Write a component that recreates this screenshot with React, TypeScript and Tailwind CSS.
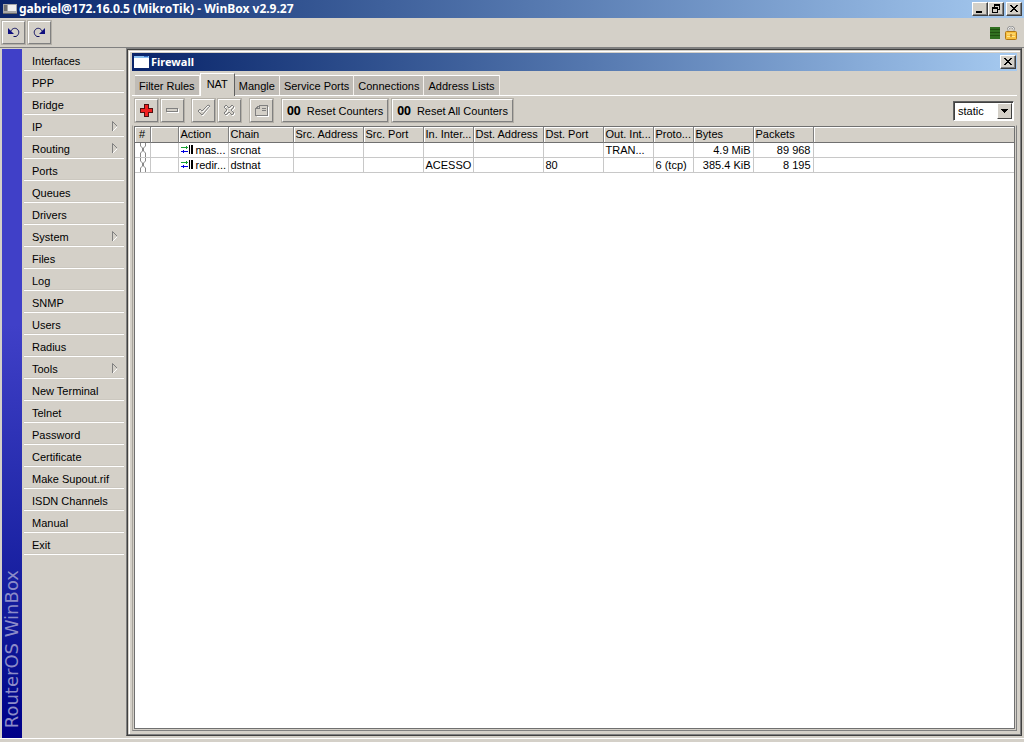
import type { ReactNode } from 'react';

const menu = [
  { label: 'Interfaces' },
  { label: 'PPP' },
  { label: 'Bridge' },
  { label: 'IP', sub: true },
  { label: 'Routing', sub: true },
  { label: 'Ports' },
  { label: 'Queues' },
  { label: 'Drivers' },
  { label: 'System', sub: true },
  { label: 'Files' },
  { label: 'Log' },
  { label: 'SNMP' },
  { label: 'Users' },
  { label: 'Radius' },
  { label: 'Tools', sub: true },
  { label: 'New Terminal' },
  { label: 'Telnet' },
  { label: 'Password' },
  { label: 'Certificate' },
  { label: 'Make Supout.rif' },
  { label: 'ISDN Channels' },
  { label: 'Manual' },
  { label: 'Exit' },
];

const tabs = ['Filter Rules', 'NAT', 'Mangle', 'Service Ports', 'Connections', 'Address Lists'];

const columns = [
  { label: '#', width: 'w-[15px]' },
  { label: '', width: 'w-[28px]' },
  { label: 'Action', width: 'w-[50px]' },
  { label: 'Chain', width: 'w-[65px]' },
  { label: 'Src. Address', width: 'w-[70px]' },
  { label: 'Src. Port', width: 'w-[60px]' },
  { label: 'In. Inter...', width: 'w-[50px]' },
  { label: 'Dst. Address', width: 'w-[70px]' },
  { label: 'Dst. Port', width: 'w-[60px]' },
  { label: 'Out. Int...', width: 'w-[50px]' },
  { label: 'Proto...', width: 'w-[40px]' },
  { label: 'Bytes', width: 'w-[60px]' },
  { label: 'Packets', width: 'w-[60px]' },
];

const rules = [
  { action: 'mas...', chain: 'srcnat', inIf: '', dstPort: '', outIf: 'TRAN...', proto: '', bytes: '4.9 MiB', packets: '89 968' },
  { action: 'redir...', chain: 'dstnat', inIf: 'ACESSO', dstPort: '80', outIf: '', proto: '6 (tcp)', bytes: '385.4 KiB', packets: '8 195' },
];

function CaptionButton({ label, children }: { label: string; children: ReactNode }) {
  return (
    <button
      aria-label={label}
      className="flex h-[14px] w-[16px] items-center justify-center border border-t-white border-r-[#404040] border-b-[#404040] border-l-white bg-[#d4d0c8] shadow-[inset_-1px_-1px_0_#808080]"
    >
      <svg width="14" height="12" shapeRendering="crispEdges" stroke="#000" fill="none">
        {children}
      </svg>
    </button>
  );
}

function CloseGlyph() {
  return (
    <path
      fill="#000"
      stroke="none"
      d="M3 2h2v1h1v1h2v-1h1v-1h2v1h-1v1h-1v1h-1v1h1v1h1v1h1v1h-2v-1h-1v-1h-2v1h-1v1h-2v-1h1v-1h1v-1h1v-1h-1v-1h-1v-1h-1z"
    />
  );
}

function ToolButton({ label, children }: { label: string; children: ReactNode }) {
  return (
    <button
      aria-label={label}
      className="flex size-[23px] items-center justify-center border border-t-white border-r-[#808080] border-b-[#808080] border-l-white bg-[#d4d0c8] outline outline-[#b4b0a8]"
    >
      {children}
    </button>
  );
}

function CounterButton({ label }: { label: string }) {
  return (
    <button className="flex h-[23px] items-center gap-[6px] border border-t-white border-r-[#808080] border-b-[#808080] border-l-white bg-[#d4d0c8] px-1 outline outline-[#b4b0a8]">
      <span className="font-['Noto_Sans'] text-[12px] font-bold">00</span>
      {label}
    </button>
  );
}

function WindowIcon() {
  return (
    <svg width="15" height="12" shapeRendering="crispEdges">
      <rect width="15" height="12" fill="#fff" />
      <rect width="15" height="2" fill="#8cc0f0" />
      <rect x="10" width="4" height="1" fill="#3870c8" />
    </svg>
  );
}

function NatIcon() {
  return (
    <svg width="12" height="9" shapeRendering="crispEdges" className="shrink-0">
      <path d="M0 2h5V1h1v1h1v1h-1v1h-1v-1h-5z" fill="#18a030" />
      <path d="M7 6h-4V5h-1v1h-2v1h2v1h1v-1h4z" fill="#0000e0" />
      <path d="M8 0h1v9h-1zM10 0h2v9h-2z" fill="#000" />
    </svg>
  );
}

function Sidebar() {
  return (
    <aside className="flex shrink-0 pl-[2px]">
      <div className="flex w-[20px] items-end justify-center bg-linear-to-b from-[#4040c8] from-40% to-[#000088] pb-[10px]">
        <span className="rotate-180 font-['DejaVu_Sans'] text-[18px] leading-[20px] whitespace-nowrap text-[#8c8cc8] [writing-mode:vertical-rl]">
          RouterOS WinBox
        </span>
      </div>
      <nav className="flex w-[104px] flex-col pr-[2px] pl-[2px]">
        {menu.map((item) => (
          <button
            key={item.label}
            className="flex h-[22px] items-center justify-between border-b border-white pt-[2px] pr-[6px] pl-2 text-left shadow-[inset_0_-1px_0_#ccc8c0]"
          >
            {item.label}
            {item.sub && (
              <svg width="6" height="11" fill="none">
                <path d="M0.500 10V0.500L5.500 5.500" stroke="#808080" />
                <path d="M1 10L5.500 5.500" stroke="#fff" />
              </svg>
            )}
          </button>
        ))}
      </nav>
    </aside>
  );
}

function RuleTable() {
  return (
    <div className="min-h-0 flex-1 border border-[#707070] bg-white">
      <table className="w-full table-fixed border-collapse text-left leading-[14px]">
        <thead>
          <tr className="h-[15px] border-b border-[#707070] bg-[#d4d0c8]">
            {columns.map((col, i) => (
              <th
                key={i}
                className={`${col.width} overflow-hidden border-r border-[#808080] p-0 pl-[2px] font-normal whitespace-nowrap shadow-[inset_1px_1px_0_#fff] first:pl-1`}
              >
                {col.label}
              </th>
            ))}
            <th className="p-0 shadow-[inset_1px_1px_0_#fff]" />
          </tr>
        </thead>
        <tbody>
          {rules.map((rule) => (
            <tr
              key={rule.chain}
              className="h-[15px] border-b border-[#c8c8c8] [&>td]:overflow-hidden [&>td]:border-r [&>td]:border-[#c8c8c8] [&>td]:p-0 [&>td]:pl-[2px] [&>td]:whitespace-nowrap [&>td:last-child]:border-r-0"
            >
              <td>
                <svg width="8" height="14" fill="none" stroke="#888" className="mx-auto block">
                  <path d="M1.500 0v3l2 2v3l-2 2v4M6.500 0v3l-2 2v3l2 2v4" />
                </svg>
              </td>
              <td />
              <td>
                <span className="flex items-center gap-[3px]">
                  <NatIcon />
                  {rule.action}
                </span>
              </td>
              <td>{rule.chain}</td>
              <td />
              <td />
              <td>{rule.inIf}</td>
              <td />
              <td>{rule.dstPort}</td>
              <td>{rule.outIf}</td>
              <td>{rule.proto}</td>
              <td className="pr-[2px]! text-right">{rule.bytes}</td>
              <td className="pr-[2px]! text-right">{rule.packets}</td>
              <td />
            </tr>
          ))}
        </tbody>
      </table>
    </div>
  );
}

function FirewallWindow() {
  return (
    <section className="flex min-w-0 flex-1 flex-col border border-t-[#808080] border-r-[#404040] border-b-[#404040] border-l-[#808080] bg-[#d4d0c8] pt-1 pr-1 pb-1 pl-[5px] shadow-[inset_1px_1px_0_#404040,inset_-1px_-1px_0_#808080,inset_2px_2px_0_#d4d0c8,inset_3px_3px_0_#fff]">
      <header className="flex h-[18px] shrink-0 items-center bg-linear-to-r from-[#0a246a] to-[#a6caf0] pr-px pl-[2px] font-['Noto_Sans'] font-bold text-white">
        <WindowIcon />
        <h2 className="flex-1 pl-[2px]">Firewall</h2>
        <CaptionButton label="Close">
          <CloseGlyph />
        </CaptionButton>
      </header>

      <div className="mt-[2px] flex shrink-0 items-end border-b border-white pl-[3px]" role="tablist">
        {tabs.map((tab) => (
          <button
            key={tab}
            role="tab"
            aria-selected={tab === 'NAT'}
            className={
              tab === 'NAT'
                ? '-mb-px h-[23px] border-t border-r border-l border-t-white border-r-[#606060] border-l-white bg-[#d4d0c8] px-[6px] pb-[2px]'
                : 'h-[20px] border-t border-r border-t-white border-r-[#f4f0ec] bg-[#c0bcb6] px-1'
            }
          >
            {tab}
          </button>
        ))}
      </div>

      <div className="flex h-[29px] shrink-0 items-center justify-between px-[3px]">
        <div className="flex items-center">
          <div className="flex gap-[3px]">
            <ToolButton label="Add">
              <svg width="13" height="13" shapeRendering="crispEdges">
                <path d="M4 0h5v4h4v5h-4v4h-5v-4h-4v-5h4z" fill="#501010" />
                <path d="M5 1h3v4h4v3h-4v4h-3v-4h-4v-3h4z" fill="#f02020" />
              </svg>
            </ToolButton>
            <ToolButton label="Remove">
              <svg width="13" height="13" shapeRendering="crispEdges">
                <path d="M1.500 5.500h11v3h-11z" fill="#e8e4dc" stroke="#fff" />
                <path d="M0.500 4.500h11v3h-11z" fill="#d4d0c8" stroke="#808080" />
              </svg>
            </ToolButton>
          </div>
          <div className="ml-2 flex gap-[3px]">
            <ToolButton label="Enable">
              <svg width="14" height="13" fill="none">
                <path d="M2 8l3-2 1 2 5-6 2 1-7 9z" stroke="#fff" />
                <path d="M1 7l2-2 2 2 6-6 2 1-8 9z" stroke="#808080" />
              </svg>
            </ToolButton>
            <ToolButton label="Disable">
              <svg width="13" height="13" fill="none">
                <path d="M4 2l3 3 3-3 2 2-3 3 3 3-2 2-3-3-3 3-2-2 3-3-3-3z" stroke="#fff" />
                <path d="M3 1l3 3 3-3 2 2-3 3 3 3-2 2-3-3-3 3-2-2 3-3-3-3z" stroke="#808080" />
              </svg>
            </ToolButton>
          </div>
          <div className="ml-[9px] flex">
            <ToolButton label="Comment">
              <svg width="14" height="13" fill="none" shapeRendering="crispEdges">
                <path d="M1.500 12.500h12V3" stroke="#fff" />
                <path d="M0.500 4.500l4-3h8v10h-12zM4.500 1.500v3h-4M7 4.500h4M7 6.500h4" stroke="#808080" />
              </svg>
            </ToolButton>
          </div>
          <div className="ml-[9px] flex gap-[4px]">
            <CounterButton label="Reset Counters" />
            <CounterButton label="Reset All Counters" />
          </div>
        </div>

        <div className="relative h-[20px] w-[61px] border border-t-[#606060] border-r-white border-b-white border-l-[#606060] bg-white shadow-[inset_1px_1px_0_#404040]">
          <select aria-label="Rule filter" className="size-full appearance-none bg-transparent pl-1 outline-none">
            <option>static</option>
            <option>all</option>
            <option>dynamic</option>
          </select>
          <span className="pointer-events-none absolute top-px right-px flex h-[16px] w-[15px] items-center justify-center border border-t-white border-r-[#404040] border-b-[#404040] border-l-white bg-[#d4d0c8]">
            <svg width="7" height="4" shapeRendering="crispEdges">
              <path d="M0 0h7v1h-1v1h-1v1h-1v1h-1v-1h-1v-1h-1v-1h-1z" />
            </svg>
          </span>
        </div>
      </div>

      <div className="flex min-h-0 flex-1 border border-[#808080] border-t-[#d4d0c8] border-l-[#a8a49c]">
        <div className="flex min-w-0 flex-1 border-r border-b border-l border-[#d4d0c8]">
          <RuleTable />
        </div>
      </div>
    </section>
  );
}

export default function App() {
  return (
    <div className="flex h-screen flex-col bg-[#d4d0c8] font-['Liberation_Sans',sans-serif] text-[11px] leading-[14px] text-black">
      <header className="flex h-[18px] shrink-0 items-center bg-linear-to-r from-[#0a246a] to-[#a6caf0] pr-[2px] pl-[3px] font-['Noto_Sans'] font-bold text-white">
        <svg width="14" height="10" shapeRendering="crispEdges">
          <rect width="14" height="10" fill="#a8a8a8" />
          <rect x="1" y="1" width="3" height="6" fill="#707070" />
          <rect x="5" y="1" width="8" height="6" fill="#f0f0f0" />
          <path d="M0 9.500h14" stroke="#686868" />
        </svg>
        <h1 className="flex-1 pl-[2px] text-[12px]">gabriel@172.16.0.5 (MikroTik) - WinBox v2.9.27</h1>
        <div className="flex">
          <CaptionButton label="Minimize">
            <path d="M3 9h6" strokeWidth="2" />
          </CaptionButton>
          <CaptionButton label="Restore">
            <path d="M5.500 4V1.500h5v5h-2M5 2h6M3.500 4.500h5v5h-5zM3 5h6" />
          </CaptionButton>
        </div>
        <div className="ml-[2px] flex">
          <CaptionButton label="Close">
            <CloseGlyph />
          </CaptionButton>
        </div>
      </header>

      <div className="flex h-[30px] shrink-0 items-center justify-between border-b border-[#808080] pr-[7px] pl-[2px]">
        <div className="flex gap-[3px]">
          <ToolButton label="Undo">
            <svg width="13" height="11" fill="none">
              <path d="M4 4C5 1.500 8 0.500 10 2S12.500 6 10.500 8.500L9 9.500H6.500" stroke="#101060" />
              <path d="M1 1v6h6z" fill="#101080" />
            </svg>
          </ToolButton>
          <ToolButton label="Redo">
            <svg width="13" height="11" fill="none">
              <path d="M9 4C8 1.500 5 0.500 3 2S0.500 6 2.500 8.500L4 9.500H6.500" stroke="#101060" />
              <path d="M12 1v6H6z" fill="#101080" />
            </svg>
          </ToolButton>
        </div>
        <div className="flex items-center gap-[5px]">
          <svg width="10" height="12" shapeRendering="crispEdges">
            <rect width="10" height="12" fill="#307020" />
            <path d="M0 2.500h10M0 5.500h10M0 8.500h10" stroke="#205010" />
          </svg>
          <svg width="12" height="14" fill="none">
            <path d="M3 7V4a3 3 0 0 1 6 0v3" stroke="#888" strokeWidth="2" />
            <path d="M3 7V4a3 3 0 0 1 6 0v3" stroke="#e8e8e8" />
            <rect x="0.500" y="5.500" width="11" height="8" rx="1" fill="#f8c040" stroke="#b07818" />
            <path d="M2 8h8M2 10.500h8" stroke="#ffe890" />
            <path d="M6 8v3" stroke="#a06010" />
          </svg>
        </div>
      </div>

      <main className="flex min-h-0 flex-1 pt-px">
        <Sidebar />
        <div className="-mt-px flex min-w-0 flex-1 pr-[2px] pb-[2px]">
          <FirewallWindow />
        </div>
      </main>
      <footer className="h-[4px] shrink-0 border-t border-white" />
    </div>
  );
}
